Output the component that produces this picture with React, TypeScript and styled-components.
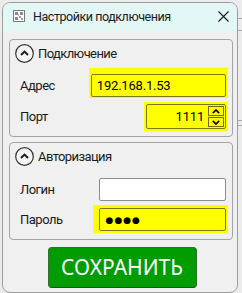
import React from 'react';
import styled, { createGlobalStyle } from 'styled-components';

const Global = createGlobalStyle`
  html, body { margin: 0; padding: 0; background: #ececec; }
  body { font-family: Roboto, "Noto Sans", sans-serif; color: #1b1b1b; }
  * { box-sizing: border-box; }
`;

const Page = styled.div`
  display: flex;
  align-items: flex-start;
  width: 242px;
  height: 293px;
  padding: 2px 0 0 2px;
  overflow: hidden;
`;

const Window = styled.div`
  flex: 0 0 236px;
  height: 291px;
  border: 1px solid #9d9d9d;
  border-radius: 8px;
  background: #f0f0f0;
  overflow: hidden;
  display: flex;
  flex-direction: column;
`;

const Backdrop = styled.div`
  flex: 1;
  display: flex;
  flex-direction: column;
`;

const BackLine = styled.div<{ $gap: number }>`
  height: 1px;
  margin-top: ${(p) => p.$gap}px;
  background: #a8a8a8;
`;

const TitleBar = styled.div`
  height: 28px;
  flex: 0 0 28px;
  background: #e3f7f6;
  display: flex;
  align-items: center;
  padding: 0 8px 2px 10px;
  gap: 8px;
`;

const Title = styled.span`
  flex: 1;
  font-size: 12.5px;
  letter-spacing: -0.45px;
  color: #1a1a1a;
  white-space: nowrap;
`;

const Body = styled.div`
  flex: 1;
  display: flex;
  flex-direction: column;
  gap: 5px;
  padding: 8px 4px 0 6px;
`;

const Group = styled.section`
  height: 98px;
  border: 1px solid #a3a3a3;
  border-radius: 4px;
  padding: 4px 6px 0 5px;
  display: flex;
  flex-direction: column;
`;

const GroupHeader = styled.div`
  display: flex;
  align-items: center;
  gap: 4px;
  height: 19px;
  font-size: 13px;
  letter-spacing: -0.6px;
  color: #1a1a1a;
`;

const Form = styled.div<{ $top: number }>`
  display: grid;
  grid-template-columns: auto 1fr;
  column-gap: 36px;
  row-gap: 7px;
  align-items: center;
  padding: ${(p) => p.$top}px 0 0 5px;
`;

const Label = styled.span`
  font-size: 13px;
  letter-spacing: -0.5px;
  color: #1a1a1a;
  white-space: nowrap;
`;

const Halo = styled.div<{ $pad: string; $width?: number }>`
  padding: ${(p) => p.$pad};
  margin: ${(p) => p.$pad.split(' ').map((v) => (v === '0' ? '0' : '-' + v)).join(' ')};
  background: #ffff00;
  justify-self: ${(p) => (p.$width ? 'end' : 'stretch')};
  width: ${(p) => (p.$width ? `${p.$width}px` : 'auto')};
`;

const Input = styled.div<{ $hl?: boolean; $h?: number; $right?: boolean }>`
  height: ${(p) => p.$h ?? 23}px;
  border: 1px solid ${(p) => (p.$hl ? '#7a7a10' : '#8c8c8c')};
  border-radius: 2px;
  background: ${(p) => (p.$hl ? '#ffff00' : '#ffffff')};
  display: flex;
  align-items: center;
  justify-content: ${(p) => (p.$right ? 'flex-end' : 'flex-start')};
  padding: ${(p) => (p.$right ? '0 1px 0 4px' : '0 5px')};
  font-size: 13px;
  letter-spacing: -0.2px;
  color: #000;
`;

const Dots = styled.span`
  font-family: "DejaVu Sans", sans-serif;
  font-size: 9px;
  letter-spacing: 1px;
  padding-left: 1px;
`;

const Spinner = styled.div`
  display: flex;
  flex-direction: column;
  gap: 1px;
  margin-left: 4px;
`;

const SpinButton = styled.div`
  width: 16px;
  height: 10px;
  border: 1px solid #6f6f00;
  display: flex;
  align-items: center;
  justify-content: center;
`;

const Footer = styled.div`
  display: flex;
  justify-content: center;
  padding: 2px 0 0 2px;
`;

const SaveButton = styled.button`
  width: 149px;
  height: 41px;
  background: #009c00;
  border: 1px solid #2f6f2f;
  border-bottom-color: #1f4f1f;
  border-radius: 4px;
  color: #ffffff;
  font-family: "Noto Sans", "Open Sans", sans-serif;
  font-size: 21px;
  padding: 0 0 2px;
  cursor: pointer;
`;

const AppIcon = () => (
  <svg width="12" height="12" viewBox="0 0 12 12">
    <rect x="0.5" y="0.5" width="11" height="11" fill="#fff" stroke="#7a7a7a" />
    <rect x="2" y="2" width="3" height="3" fill="#8a8a8a" />
    <rect x="7" y="2" width="3" height="3" fill="#8a8a8a" />
    <rect x="2" y="7" width="3" height="3" fill="#8a8a8a" />
    <rect x="6" y="6" width="2" height="2" fill="#9a9a9a" />
    <rect x="8" y="8" width="2" height="2" fill="#9a9a9a" />
    <rect x="5" y="4" width="1" height="2" fill="#b0b0b0" />
  </svg>
);

const CloseIcon = () => (
  <svg width="11" height="11" viewBox="0 0 11 11">
    <path d="M0.5 0.5 L10.5 10.5 M10.5 0.5 L0.5 10.5" stroke="#1a1a1a" strokeWidth="1.1" />
  </svg>
);

const ExpandIcon = () => (
  <svg width="19" height="19" viewBox="0 0 19 19">
    <circle cx="9.5" cy="9.5" r="8.8" fill="#f5f5f5" stroke="#333" strokeWidth="1.2" />
    <path d="M6 11 L9.5 7.5 L13 11" fill="none" stroke="#1a1a1a" strokeWidth="1.9" />
  </svg>
);

const Chevron = ({ up }: { up?: boolean }) => (
  <svg width="8" height="5" viewBox="0 0 8 5">
    <path d={up ? 'M0.8 4.2 L4 1 L7.2 4.2' : 'M0.8 0.8 L4 4 L7.2 0.8'} fill="none" stroke="#000" strokeWidth="1.7" />
  </svg>
);

export default function App() {
  return (
    <>
      <Global />
      <Page>
        <Window>
          <TitleBar>
            <AppIcon />
            <Title>Настройки подключения</Title>
            <CloseIcon />
          </TitleBar>
          <Body>
            <Group>
              <GroupHeader>
                <ExpandIcon />
                Подключение
              </GroupHeader>
              <Form $top={11}>
                <Label>Адрес</Label>
                <Halo $pad="6px 2px 1px 2px">
                  <Input $hl>192.168.1.53</Input>
                </Halo>
                <Label>Порт</Label>
                <Halo $pad="2px 2px 2px 2px" $width={84}>
                  <Input $hl $h={25} $right>
                    1111
                    <Spinner>
                      <SpinButton>
                        <Chevron up />
                      </SpinButton>
                      <SpinButton>
                        <Chevron />
                      </SpinButton>
                    </Spinner>
                  </Input>
                </Halo>
              </Form>
            </Group>
            <Group>
              <GroupHeader>
                <ExpandIcon />
                Авторизация
              </GroupHeader>
              <Form $top={12}>
                <Label>Логин</Label>
                <Input />
                <Label>Пароль</Label>
                <Halo $pad="3px 2px 2px 6px">
                  <Input $hl>
                    <Dots>●●●●</Dots>
                  </Input>
                </Halo>
              </Form>
            </Group>
            <Footer>
              <SaveButton>СОХРАНИТЬ</SaveButton>
            </Footer>
          </Body>
        </Window>
        <Backdrop>
          <BackLine $gap={16} />
          <BackLine $gap={11} />
          <BackLine $gap={89} />
          <BackLine $gap={4} />
        </Backdrop>
      </Page>
    </>
  );
}
